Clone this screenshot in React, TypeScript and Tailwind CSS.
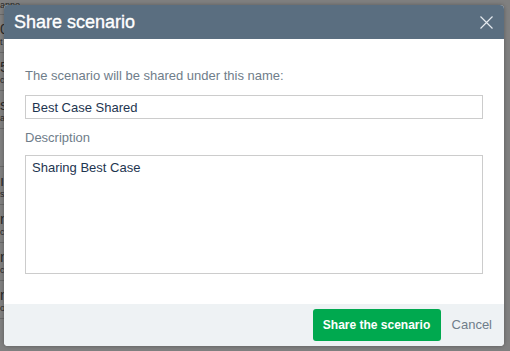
import React from "react";

const rows = [
  { big: "0", small: "t" },
  { big: "5", small: "c" },
  { big: "s", small: "a" },
  { big: "", small: "" },
  { big: "ı", small: "s" },
  { big: "n", small: "c" },
  { big: "n", small: "c" },
  { big: "n", small: "ooo" },
];

export default function App() {
  return (
    <div
      className="relative w-[510px] h-[351px] overflow-hidden bg-[#808080]"
      style={{ fontFamily: "'Liberation Sans', Arial, sans-serif" }}
    >
      {/* faint background page fragments */}
      <div className="w-[20px] h-full flex flex-col text-[#2a2a2a] leading-none overflow-hidden">
        <div className="h-[15px] shrink-0 border-b border-[#6a6a6a] text-[9px] leading-[9px] pt-[1px] overflow-hidden">anno</div>
        {rows.map((r, i) => (
          <div
            key={i}
            className="h-[38px] shrink-0 border-b border-[#6a6a6a] flex flex-col justify-center gap-[2px] overflow-hidden"
          >
            <span className="text-[15px] leading-[15px]">{r.big}</span>
            <span className="text-[9px] leading-[9px]">{r.small}</span>
          </div>
        ))}
      </div>

      {/* dialog */}
      <div className="absolute left-[4px] top-[5px] w-[500px] h-[341px] flex flex-col rounded-[4px] overflow-hidden bg-white shadow-[0_0_4px_rgba(0,0,0,0.3)]">
        <div className="h-[34px] shrink-0 bg-[#5a6e80] flex items-center justify-between pl-[10px] pr-[11px]">
          <span className="text-white text-[18px] leading-[20px] [-webkit-text-stroke:0.35px_white]">Share scenario</span>
          <svg width="13" height="13" viewBox="0 0 13 13" className="mt-[1px]">
            <path d="M0.5 0.5 L12.5 12.5 M12.5 0.5 L0.5 12.5" stroke="#e4e9ee" strokeWidth="1.2" fill="none" />
          </svg>
        </div>
        <div className="flex-1 flex flex-col px-[21px] pt-[29px]">
          <label className="text-[13px] text-[#6f7d8a] leading-[15px]">
            The scenario will be shared under this name:
          </label>
          <div className="mt-[12px] w-[458px] h-[24px] border border-[#cccccc] flex items-center px-[6px] text-[13px] leading-[15px] text-[#1e3550]">
            Best Case Shared
          </div>
          <label className="mt-[11px] text-[13px] text-[#6f7d8a] leading-[15px]">Description</label>
          <div className="mt-[10px] w-[458px] h-[119px] border border-[#cccccc] px-[6px] pt-[4px] text-[13px] leading-[15px] text-[#1e3550]">
            Sharing Best Case
          </div>
        </div>
        <div className="h-[42px] shrink-0 bg-[#eef2f4] flex items-center justify-end pr-[12px]">
          <button className="h-[32px] w-[128px] rounded-[3px] bg-[#00a94f] text-white text-[12px] font-bold">
            Share the scenario
          </button>
          <span className="ml-[11px] text-[13px] text-[#6f7d8a]">Cancel</span>
        </div>
      </div>
    </div>
  );
}
